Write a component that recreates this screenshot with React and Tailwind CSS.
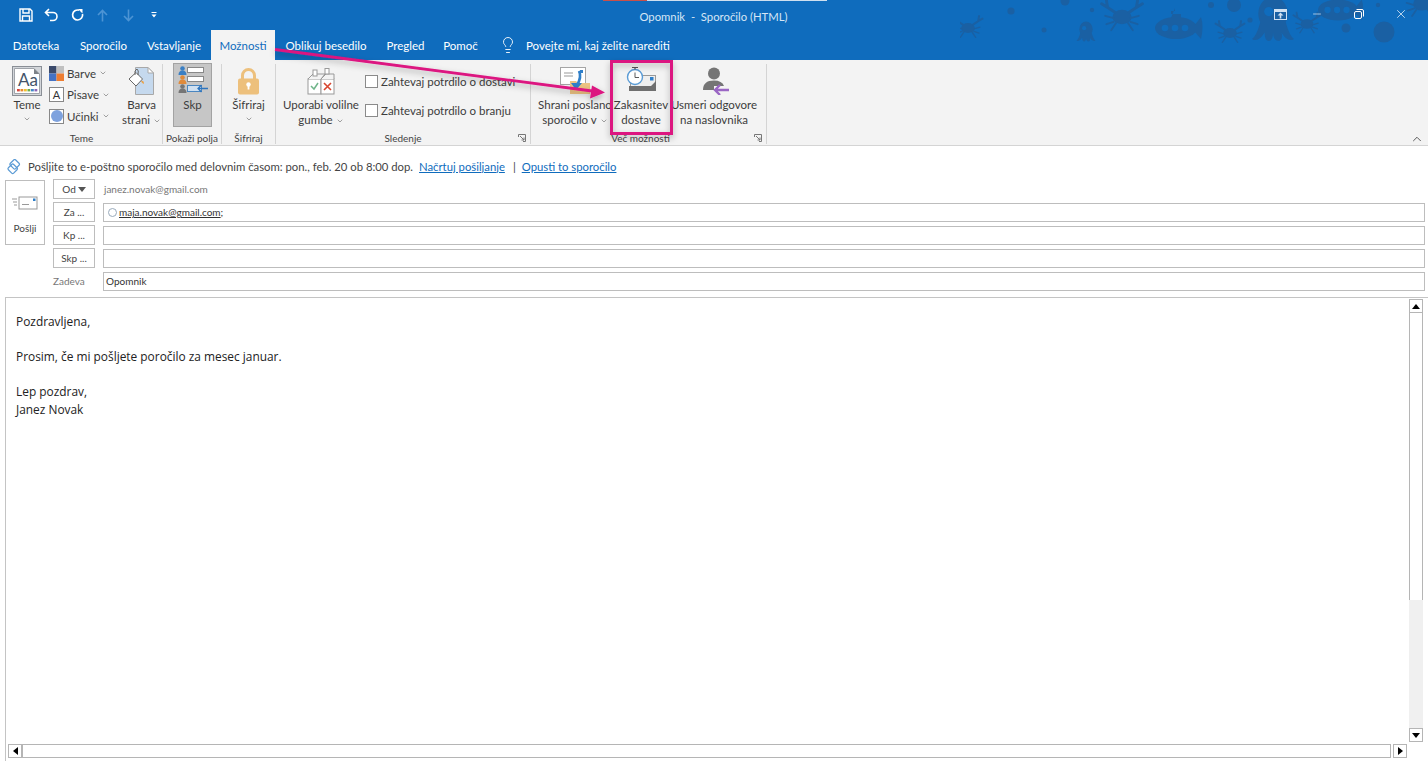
import { ChevronDown, ChevronUp, Lightbulb, Minus, X } from "lucide-react";

const TABS = [
  ["Datoteka", "w-[68px]"],
  ["Sporočilo", "w-[67px]"],
  ["Vstavljanje", "w-[74px]"],
  ["Možnosti", "w-[64px]"],
  ["Oblikuj besedilo", "w-[102px]"],
  ["Pregled", "w-[57px]"],
  ["Pomoč", "w-[53px]"],
];

const Caret = ({ className = "" }) => (
  <ChevronDown size={8} strokeWidth={1.6} className={`inline-block text-[#555] ${className}`} />
);

function Crab(props) {
  return (
    <g {...props} fill="none" stroke="#1a60a3" strokeWidth="1.6" strokeLinecap="round">
      <ellipse cx="0" cy="0" rx="8" ry="6" fill="#1a60a3" stroke="none" />
      <path d="M-7 1 L-14 -1 M-7 4 L-13 6 M-5 5 L-9 11 M7 1 L14 -1 M7 4 L13 6 M5 5 L9 11" />
      <path d="M-6 -4 L-12 -8 L-13 -14 M-12 -8 L-17 -11 M6 -4 L12 -8 L13 -14 M12 -8 L17 -11" strokeWidth="2.4" />
    </g>
  );
}

function Octopus({ x, y, s = 1 }) {
  return (
    <g transform={`translate(${x} ${y}) scale(${s})`} fill="#1a60a3">
      <ellipse cx="0" cy="-3" rx="7" ry="8" />
      <path d="M-6 1 Q-8 8 -10 9 Q-7 11 -4 6 Q-4 10 -2 10 Q0 10 0 6 Q0 10 3 10 Q5 9 4 6 Q7 11 10 9 Q8 8 6 1 Z" />
      <circle cx="-2" cy="-4" r="2.2" fill="#0f6cbd" />
    </g>
  );
}

function Sub({ x, y, s = 1 }) {
  return (
    <g transform={`translate(${x} ${y}) scale(${s})`} fill="#1a60a3">
      <ellipse cx="0" cy="0" rx="21" ry="11" />
      <path d="M-5 -10 V-17 H-1 V-20 M-5 -10 H5 V-14 H-5" />
      <path d="M18 -2 L25 -11 Q28 -2 25 11 L18 3 Z" />
      <circle cx="-11" cy="0" r="3.3" fill="#0f6cbd" />
      <circle cx="-1" cy="0" r="3.3" fill="#0f6cbd" />
      <circle cx="9" cy="0" r="3.3" fill="#0f6cbd" />
    </g>
  );
}

function SeaLife() {
  return (
    <svg className="absolute left-[960px] top-0 pointer-events-none" width="468" height="60" viewBox="0 0 468 60">
      <Crab transform="translate(8 28) scale(.85)" />
      <Crab transform="translate(162 17) scale(1.2)" />
      <Crab transform="translate(270 33) scale(.85)" />
      <Crab transform="translate(347 24) scale(.8)" />
      <Crab transform="translate(462 4) scale(1.1)" />
      <Octopus x={126} y={32} s={.95} />
      <Octopus x={313} y={20} s={2.1} />
      <Sub x={216} y={28} />
      <Sub x={378} y={10} s={.95} />
      <g fill="#1a60a3">
        <circle cx="51" cy="11" r="3.6" />
        <circle cx="105" cy="1" r="4.5" />
        <circle cx="132" cy="10" r="2.2" />
        <circle cx="84" cy="30" r="2.5" />
        <circle cx="251" cy="5" r="3" />
        <circle cx="274" cy="5" r="7" />
        <circle cx="290" cy="20" r="2.6" />
        <circle cx="386" cy="28" r="4.5" />
        <circle cx="424" cy="32" r="10.5" />
        <circle cx="418" cy="5" r="2.2" />
      </g>
    </svg>
  );
}

function QuickAccess() {
  return (
    <div className="flex items-center h-[30px] pl-[19px] text-white">
      <svg width="14" height="14" viewBox="0 0 14 14" fill="none" stroke="currentColor" strokeWidth="1.4">
        <path d="M1 1 H11 L13 3 V13 H1 Z" />
        <path d="M4 1 V5 H10 V1 M3.5 13 V8 H10.5 V13" />
      </svg>
      <svg className="ml-[11px]" width="15" height="14" viewBox="0 0 15 14" fill="none" stroke="currentColor" strokeWidth="1.6">
        <path d="M5 1 L1.5 4.5 L5 8 M2 4.5 H9 A4 4 0 0 1 9 12.5 H6" />
      </svg>
      <svg className="ml-[12px]" width="13" height="14" viewBox="0 0 13 14" fill="none" stroke="currentColor" strokeWidth="1.7">
        <path d="M8 2.2 A5 5 0 1 0 11.5 6" />
        <path d="M7 1 H11.5 V5.5" fill="currentColor" stroke="none" />
      </svg>
      <svg className="ml-[13px] text-[#4d94d4]" width="11" height="13" viewBox="0 0 11 13" fill="none" stroke="currentColor" strokeWidth="1.6">
        <path d="M5.5 12.5 V1.5 M1 6 L5.5 1.5 L10 6" />
      </svg>
      <svg className="ml-[15px] text-[#4d94d4]" width="11" height="13" viewBox="0 0 11 13" fill="none" stroke="currentColor" strokeWidth="1.6">
        <path d="M5.5 .5 V11.5 M1 7 L5.5 11.5 L10 7" />
      </svg>
      <svg className="ml-[17px]" width="6" height="6" viewBox="0 0 6 6" fill="currentColor">
        <path d="M.5 0 H5.5 V1 H.5 Z M.5 2.5 H5.5 L3 5.5 Z" />
      </svg>
    </div>
  );
}

function WindowButtons() {
  return (
    <div className="absolute right-0 top-[-1px] h-[30px] w-[154px] text-[#dbe9f6]">
      <div className="flex items-center h-full text-white">
        <svg width="13" height="11" viewBox="0 0 13 11" fill="#cfe1f2">
          <path d="M0 0 H13 V11 H0 Z M1 3 V10 H12 V3 Z M6.5 3.5 L9.5 6.5 H7.3 V9.5 H5.7 V6.5 H3.5 Z" fillRule="evenodd" />
        </svg>
        <Minus size={12} strokeWidth={1.2} className="ml-[24px]" />
        <svg className="ml-[31px]" width="10" height="10" viewBox="0 0 10 10" fill="none" stroke="currentColor" strokeWidth="1">
          <rect x=".5" y="2.5" width="7" height="7" rx="1.5" />
          <path d="M2.5 .5 H8 Q9.5 .5 9.5 2 V7.5" />
        </svg>
        <X size={14} strokeWidth={1.2} className="ml-[30px]" />
      </div>
    </div>
  );
}

function Tabs() {
  return (
    <div className="flex items-stretch h-[30px] pl-[2px] text-[11.5px] text-white">
      {TABS.map(([t, w]) => (
        <div
          key={t}
          className={`${w} flex items-center justify-center pt-[1px] ${t === "Možnosti" ? "bg-[#f3f3f3] text-[#0f6cbd]" : ""}`}
        >
          {t}
        </div>
      ))}
      <div className="flex items-center ml-[12px]">
        <Lightbulb size={18} strokeWidth={1.2} />
        <span className="ml-[9px] pt-[1px]">Povejte mi, kaj želite narediti</span>
      </div>
    </div>
  );
}

function Launcher() {
  return (
    <svg className="absolute right-[4px] bottom-[2px]" width="8" height="8" viewBox="0 0 8 8" fill="none" stroke="#777" strokeWidth="1">
      <path d="M.5 3 V.5 H7.5 V7.5 H5 M2 2 L6 6 M6 3.5 V6 H3.5" />
    </svg>
  );
}

function Group({ label, width, children, launcher, labelClass = "" }) {
  return (
    <div className={`${width} relative flex flex-col h-[80px] border-r border-[#d4d4d4]`}>
      <div className="flex-1 flex min-h-0">{children}</div>
      <div className={`h-[12px] leading-[12px] text-center text-[10px] text-[#444] ${labelClass}`}>{label}</div>
      {launcher && <Launcher />}
    </div>
  );
}

function BigButton({ width, icon, lines, caretLine }) {
  return (
    <div className={`${width} flex flex-col items-center text-[11.5px] leading-[15px] text-[#3c3c3c] whitespace-nowrap`}>
      <div className="h-[32px] mt-[1px] flex items-center justify-center">{icon}</div>
      <div className="text-center">
        {lines.map((l, i) => (
          <div key={l}>
            {l}
            {caretLine && i === lines.length - 1 && <Caret className="ml-[3px]" />}
          </div>
        ))}
      </div>
    </div>
  );
}

function ThemeRow({ icon, label }) {
  return (
    <div className="flex items-center h-[21.5px] text-[11.5px] text-[#3c3c3c]">
      <span className="w-[15px] h-[15px] mr-[3px]">{icon}</span>
      {label}
      <Caret className="ml-[3px]" />
    </div>
  );
}

function Check({ label }) {
  return (
    <div className="flex items-center h-[15px] text-[11.5px] text-[#3c3c3c] whitespace-nowrap">
      <span className="w-[13px] h-[13px] border border-[#8a8a8a] bg-white mr-[3px]" />
      {label}
    </div>
  );
}

const ThemesIcon = (
  <div className="relative w-[30px] h-[30px]">
    <svg className="absolute inset-0" width="30" height="30" viewBox="0 0 30 30">
      <rect x=".5" y=".5" width="29" height="29" fill="#d3d6da" stroke="#8a8f96" />
      <path d="M2.5 2.5 H22 L27.5 8 V27.5 H2.5 Z" fill="#fff" stroke="#a0a4aa" />
      <path d="M22 2.5 V8 H27.5 Z" fill="#7d8288" />
      {["#d9483b", "#e98a2d", "#f0c030", "#71ad47", "#3f87c9", "#8a63b5"].map((c, i) => (
        <rect key={c} x={5 + i * 3.5} y="23" width="2.8" height="2.4" fill={c} />
      ))}
    </svg>
    <span className="absolute left-[6px] top-[4px] text-[17px] leading-[19px] text-[#44546a]">Aa</span>
  </div>
);

const PageColorIcon = (
  <svg width="28" height="28" viewBox="0 0 28 28">
    <path d="M7.5 .5 H20 L25.5 6 V27.5 H7.5 Z" fill="#c5d9ee" stroke="#a8a8a8" />
    <path d="M20 .5 V6 H25.5 Z" fill="#fff" stroke="#a8a8a8" />
    <path d="M1 12 L8 5.5 L14.5 12 L8 19 Z" fill="#fff" stroke="#666" />
    <path d="M7 8 Q6 3 9 2 Q11 3 10 8" fill="none" stroke="#666" />
    <path d="M13 14 Q16 13 16 17 Q14 17 13 14 Z" fill="#e9a54e" />
  </svg>
);

const BccIcon = (
  <svg width="30" height="28" viewBox="0 0 30 28">
    {[
      [0, "#3a7fc4"],
      [9, "#e08a3a"],
      [18, "#757575"],
    ].map(([y, c]) => (
      <g key={y}>
        <circle cx="4.5" cy={y + 2.5} r="2.3" fill={c} />
        <path d={`M.5 ${y + 9} Q.5 ${y + 4.5} 4.5 ${y + 4.5} Q8.5 ${y + 4.5} 8.5 ${y + 9} Z`} fill={c} />
      </g>
    ))}
    <rect x="9.5" y="1.5" width="16" height="5" fill="#fff" stroke="#888" />
    <rect x="9.5" y="10.5" width="16" height="5" fill="#fff" stroke="#888" />
    <rect x="9.5" y="19.5" width="14" height="6" fill="#cfe0f1" stroke="#4a86c0" />
    <path d="M30 22.5 H20 M23.5 19 L20 22.5 L23.5 26" stroke="#2f75bd" strokeWidth="1.3" fill="none" />
  </svg>
);

const LockIcon = (
  <svg width="21" height="27" viewBox="0 0 21 27">
    <path d="M4.5 11 V7.5 A6 6 0 0 1 16.5 7.5 V11" fill="none" stroke="#edc07c" strokeWidth="3" />
    <rect x="0" y="10.5" width="21" height="16" rx="2" fill="#edc07c" />
    <circle cx="10.5" cy="16.5" r="2.2" fill="#fff" />
    <rect x="9.6" y="16.5" width="1.8" height="5" fill="#fff" />
  </svg>
);

const VoteIcon = (
  <svg width="28" height="27" viewBox="0 0 28 27">
    <rect x="1" y="11" width="13" height="15" fill="#fff" stroke="#999" />
    <rect x="14" y="11" width="13" height="15" fill="#fff" stroke="#999" />
    <path d="M1 11 L6 6 H18 L14 11 M14 11 L19 6 H27 V11" fill="#f3f3f3" stroke="#999" />
    <rect x="6" y="2" width="4" height="6" fill="#fff" stroke="#999" />
    <rect x="18" y="0.5" width="4" height="5.5" fill="#fff" stroke="#999" />
    <path d="M4 18 L7 21 L11 15" fill="none" stroke="#6fb58a" strokeWidth="1.5" />
    <path d="M17 15 L24 22 M24 15 L17 22" stroke="#d8452f" strokeWidth="1.6" />
  </svg>
);

const SaveSentIcon = (
  <svg width="30" height="28" viewBox="0 0 30 28">
    <rect x=".5" y=".5" width="25" height="17" fill="#fff" stroke="#a5a5a5" />
    <rect x="20" y="3" width="3" height="3" fill="#2f7fc9" />
    <path d="M4 6 H13 M4 9 H13" stroke="#999" />
    <path d="M10 14 H16 L18 16 H30 V27 H10 Z" fill="#edc382" />
    <path d="M19 4 Q22 10 17 18" fill="none" stroke="#2f7fc9" strokeWidth="2.6" />
    <path d="M11 16 H22 L16 23 Z" fill="#2f7fc9" />
  </svg>
);

const DelayIcon = (
  <svg width="30" height="28" viewBox="0 0 30 28">
    <rect x="4.5" y="8.5" width="25" height="14" fill="#efefef" stroke="#999" />
    <rect x="24" y="10" width="3.5" height="3.5" fill="#2f7fc9" />
    <path d="M3 19 H25 L30 14 V24 H3 Z" fill="#6f6f6f" />
    <circle cx="9" cy="10" r="7.5" fill="#fff" stroke="#5a9bd5" strokeWidth="1.4" />
    <path d="M9 5.5 V10.5 H13" fill="none" stroke="#5a5a5a" />
    <path d="M6 .5 H12 M9 .5 V2.5" stroke="#555" strokeWidth="1.2" />
  </svg>
);

const ReplyIcon = (
  <svg width="30" height="28" viewBox="0 0 30 28">
    <circle cx="15" cy="6.5" r="6" fill="#757575" />
    <path d="M4 23 Q4 13.5 15 13.5 Q23 13.5 25 19 H15 V23 Z" fill="#757575" />
    <path d="M30 23 H16 M21 18 L16 23 L21 28" fill="none" stroke="#9a66c4" strokeWidth="2.4" />
  </svg>
);

function Ribbon() {
  return (
    <div className="flex items-start h-[86px] pt-[4px] pl-[1px] bg-[#f3f3f3] border-b border-[#d4d4d4]">
      <Group label="Teme" width="w-[162px]">
        <div className="pl-[5px] w-[47px]">
          <BigButton width="w-[42px]" icon={ThemesIcon} lines={["Teme"]} />
          <div className="text-center pr-[1px] leading-[10px]"><Caret /></div>
        </div>
        <div className="flex flex-col ml-[1px] -mt-[1.5px]">
          <ThemeRow
            label="Barve"
            icon={
              <svg width="15" height="15" viewBox="0 0 15 15">
                <rect width="7.5" height="7.5" fill="#3b4a6b" />
                <rect x="7.5" width="7.5" height="7.5" fill="#c0c0c0" />
                <rect y="7.5" width="7.5" height="7.5" fill="#4472c4" />
                <rect x="7.5" y="7.5" width="7.5" height="7.5" fill="#ed7d31" />
              </svg>
            }
          />
          <ThemeRow
            label="Pisave"
            icon={
              <div className="w-[15px] h-[15px] border border-[#888] bg-white text-[11px] leading-[13px] text-center text-[#333]">A</div>
            }
          />
          <ThemeRow
            label="Učinki"
            icon={
              <div className="w-[15px] h-[15px] border border-[#888] bg-white flex items-center justify-center">
                <div className="w-[12px] h-[12px] rounded-full bg-[#7ea2de]" />
              </div>
            }
          />
        </div>
        <BigButton width="w-[44px] ml-[11px]" icon={PageColorIcon} lines={["Barva", "strani"]} caretLine />
      </Group>
      <Group label="Pokaži polja" width="w-[59px]">
        <div className="ml-[10px] -mt-[1px] w-[39px] h-[64px] bg-[#c6c6c6] border border-[#a3a3a3] flex flex-col items-center text-[11.5px] leading-[15px] text-[#3c3c3c]">
          <div className="mt-[2px] h-[28px]">{BccIcon}</div>
          <div className="mt-[3px]">Skp</div>
        </div>
      </Group>
      <Group label="Šifriraj" width="w-[54px]">
        <div className="w-full">
          <BigButton width="w-full" icon={LockIcon} lines={["Šifriraj"]} />
          <div className="text-center leading-[10px]"><Caret /></div>
        </div>
      </Group>
      <Group label="Sledenje" width="w-[255px]" launcher>
        <BigButton width="w-[90px]" icon={VoteIcon} lines={["Uporabi volilne", "gumbe"]} caretLine />
        <div className="flex flex-col gap-[14px] mt-[10px] -ml-[1px]">
          <Check label="Zahtevaj potrdilo o dostavi" />
          <Check label="Zahtevaj potrdilo o branju" />
        </div>
      </Group>
      <Group label="Več možnosti" width="w-[236px]" launcher labelClass="pr-[16px]">
        <BigButton width="w-[88px]" icon={SaveSentIcon} lines={["Shrani poslano", "sporočilo v"]} caretLine />
        <BigButton width="w-[44px]" icon={DelayIcon} lines={["Zakasnitev", "dostave"]} />
        <BigButton width="w-[102px]" icon={ReplyIcon} lines={["Usmeri odgovore", "na naslovnika"]} />
      </Group>
    </div>
  );
}

function InfoBar() {
  return (
    <div className="flex items-center h-[32px] pl-[6px] pt-[10px] text-[11.3px] text-[#444]">
      <svg width="16" height="16" viewBox="0 0 16 16" fill="none" stroke="#5b9bd5" strokeWidth="1.2">
        <rect x="5" y="1.5" width="7.5" height="7.5" rx="1.4" transform="rotate(45 8.7 5.2)" />
        <rect x="3" y="6" width="7.5" height="7.5" rx="1.4" transform="rotate(45 6.7 9.7)" />
      </svg>
      <span className="ml-[6px]">Pošljite to e-poštno sporočilo med delovnim časom: pon., feb. 20 ob 8:00 dop.</span>
      <a className="ml-[6px] text-[#0f6cbd] underline">Načrtuj pošiljanje</a>
      <span className="ml-[8px]">|</span>
      <a className="ml-[6px] text-[#0f6cbd] underline">Opusti to sporočilo</a>
    </div>
  );
}

function AddrButton({ children }) {
  return (
    <div className="w-[42px] h-[20px] pt-[1px] border border-[#bdbdbd] flex items-center justify-center text-[10px] text-[#444]">
      {children}
    </div>
  );
}

function Field({ children }) {
  return (
    <div className="flex-1 h-[19px] mt-[1px] ml-[8px] border border-[#bdbdbd] flex items-center pl-[2px] text-[10px] text-[#333]">
      {children}
    </div>
  );
}

function Header() {
  return (
    <div className="flex pl-[5px] pr-[3px]">
      <div className="w-[40px] h-[65px] mt-[2px] border border-[#bdbdbd] flex flex-col items-center text-[10px] text-[#444]">
        <svg className="mt-[15px]" width="26" height="14" viewBox="0 0 26 14" fill="none">
          <rect x="7" y="1" width="18" height="12" fill="#fff" stroke="#999" />
          <rect x="21" y="2.5" width="2.5" height="2.5" fill="#2f7fc9" />
          <path d="M10 8.5 H17 M0 3 H5 M1 6 H5 M2 9 H5" stroke="#999" />
        </svg>
        <span className="mt-[11px]">Pošlji</span>
      </div>
      <div className="flex-1 ml-[8px] flex flex-col gap-[3px] pt-[1px]">
        <div className="flex items-center h-[20px]">
          <AddrButton>
            Od
            <span className="ml-[2px] w-0 h-0 border-x-[4px] border-x-transparent border-t-[5px] border-t-[#555]" />
          </AddrButton>
          <span className="ml-[9px] text-[10px] text-[#777]">janez.novak@gmail.com</span>
        </div>
        <div className="flex items-center">
          <AddrButton>Za ...</AddrButton>
          <Field>
            <span className="w-[9px] h-[9px] mt-[-1px] ml-[2px] mr-[2px] rounded-full border border-[#9ab]" />
            <span className="underline">maja.novak@gmail.com</span>;
          </Field>
        </div>
        <div className="flex items-center">
          <AddrButton>Kp ...</AddrButton>
          <Field />
        </div>
        <div className="flex items-center">
          <AddrButton>Skp ...</AddrButton>
          <Field />
        </div>
        <div className="flex items-center">
          <div className="w-[42px] h-[20px] pt-[1px] flex items-center text-[10px] text-[#777]">Zadeva</div>
          <Field>Opomnik</Field>
        </div>
      </div>
    </div>
  );
}

function ScrollBtn({ dir }) {
  const tri = {
    up: "border-x-[4px] border-x-transparent border-b-[5px] border-b-black",
    down: "border-x-[4px] border-x-transparent border-t-[5px] border-t-black",
    left: "border-y-[4px] border-y-transparent border-r-[5px] border-r-black",
    right: "border-y-[4px] border-y-transparent border-l-[5px] border-l-black",
  }[dir];
  return (
    <div className="w-[14px] h-[14px] shrink-0 border border-[#b5b5b5] bg-white flex items-center justify-center">
      <span className={`w-0 h-0 ${tri}`} />
    </div>
  );
}

function Body() {
  return (
    <div className="flex flex-col h-[464px] mt-[6px] ml-[5px] border-t border-l border-[#c4c4c4] pt-[1px] pr-[5px] pl-[1px]">
      <div className="flex flex-1 min-h-0">
        <div className="flex-1 pl-[9px] pt-[14px] font-['Open_Sans',sans-serif] text-[11.9px] leading-[17.6px] text-[#222]">
          <p>Pozdravljena,</p>
          <p className="mt-[17.6px]">Prosim, če mi pošljete poročilo za mesec januar.</p>
          <p className="mt-[17.6px]">Lep pozdrav,</p>
          <p>Janez Novak</p>
        </div>
        <div className="w-[14px] flex flex-col bg-[#f0f0f0]">
          <ScrollBtn dir="up" />
          <div className="h-[287px] bg-white border-x border-[#b5b5b5]" />
          <div className="flex-1" />
          <ScrollBtn dir="down" />
        </div>
      </div>
      <div className="flex h-[14px] mt-[2px] mb-[3px] pl-[1px] pr-[16px]">
        <ScrollBtn dir="left" />
        <div className="flex-1 border border-[#b5b5b5] bg-white" />
        <div className="w-[2px]" />
        <ScrollBtn dir="right" />
      </div>
    </div>
  );
}

function Annotations() {
  return (
    <svg className="absolute left-0 top-0 pointer-events-none" width="700" height="150" viewBox="0 0 700 150">
      <defs>
        <filter id="sh" x="-5%" y="-30%" width="110%" height="170%">
          <feDropShadow dx="0" dy="3" stdDeviation="3" floodColor="#000" floodOpacity=".3" />
        </filter>
      </defs>
      <g filter="url(#sh)">
        <path d="M275 49.5 L592 91" stroke="#dc1480" strokeWidth="2.8" fill="none" />
        <path d="M605 92.5 L592 85.5 L590 98.5 Z" fill="#dc1480" />
        <rect x="611.5" y="61.5" width="60" height="72" fill="none" stroke="#dc1480" strokeWidth="3" />
      </g>
    </svg>
  );
}

export default function App() {
  return (
    <div className="relative w-[1428px] h-[762px] overflow-hidden bg-white font-['Lato','Open_Sans',sans-serif]">
      <div className="relative h-[60px] bg-[#0f6cbd]">
        <SeaLife />
        <div className="absolute left-[603px] top-0 h-[1px] w-[44px] bg-[#c8504a]" />
        <div className="absolute left-[647px] top-0 h-[1px] w-[180px] bg-[#cfe0f0]" />
        <div className="relative h-[30px]">
          <QuickAccess />
          <div className="absolute inset-0 flex items-center justify-center pt-[4px] text-[11.3px] text-[#d6e6f5] whitespace-pre">
            <span className="ml-[-1px]">Opomnik  -  Sporočilo (HTML)</span>
          </div>
          <WindowButtons />
        </div>
        <Tabs />
      </div>
      <Ribbon />
      <div className="absolute right-[4px] top-[132px]">
        <ChevronUp size={14} strokeWidth={1.5} className="text-[#444]" />
      </div>
      <InfoBar />
      <Header />
      <Body />
      <Annotations />
    </div>
  );
}
